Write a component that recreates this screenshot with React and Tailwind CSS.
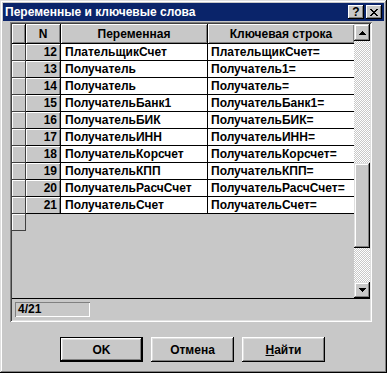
import React from "react";

const rows = [
  ["12", "ПлательщикСчет", "ПлательщикСчет="],
  ["13", "Получатель", "Получатель1="],
  ["14", "Получатель", "Получатель="],
  ["15", "ПолучательБанк1", "ПолучательБанк1="],
  ["16", "ПолучательБИК", "ПолучательБИК="],
  ["17", "ПолучательИНН", "ПолучательИНН="],
  ["18", "ПолучательКорсчет", "ПолучательКорсчет="],
  ["19", "ПолучательКПП", "ПолучательКПП="],
  ["20", "ПолучательРасчСчет", "ПолучательРасчСчет="],
  ["21", "ПолучательСчет", "ПолучательСчет="],
];

function Arrow({ up }) {
  return (
    <svg width="7" height="4" viewBox="0 0 7 4">
      {up ? (
        <path d="M3 0h1v1h1v1h1v1h1v1H0V3h1V2h1V1h1z" fill="#000" />
      ) : (
        <path d="M0 0h7v1H6v1H5v1H4v1H3V3H2V2H1V1H0z" fill="#000" />
      )}
    </svg>
  );
}

function ScrollBtn({ up, h }) {
  return (
    <div
      className={`flex items-center justify-center bg-[#c8c8c8] shadow-[inset_-1px_-1px_#000,inset_1px_1px_#dfdfdf,inset_-2px_-2px_#808080,inset_2px_2px_#fff] ${
        h === 17 ? "h-[17px]" : "h-[16px]"
      }`}
    >
      <Arrow up={up} />
    </div>
  );
}

export default function App() {
  return (
    <div className="w-[387px] h-[373px] bg-[#c8c8c8] p-[3px] flex flex-col font-['Liberation_Sans',Arial,sans-serif] font-bold text-[12px] text-black shadow-[inset_-1px_-1px_#000,inset_1px_1px_#dfdfdf,inset_-2px_-2px_#808080,inset_2px_2px_#fff]">
      {/* Title bar */}
      <div className="h-[18px] bg-[#0a246a] flex items-center pl-[2px] pr-[2px]">
        <span className="text-white text-[12px] leading-[18px] flex-1">
          Переменные и ключевые слова
        </span>
        <div className="w-[16px] h-[14px] flex items-center justify-center bg-[#c8c8c8] shadow-[inset_-1px_-1px_#000,inset_1px_1px_#fff,inset_-2px_-2px_#808080] text-[12px] leading-[12px]">
          ?
        </div>
        <div className="w-[16px] h-[14px] ml-[2px] flex items-center justify-center bg-[#c8c8c8] shadow-[inset_-1px_-1px_#000,inset_1px_1px_#fff,inset_-2px_-2px_#808080]">
          <svg width="8" height="7" viewBox="0 0 8 7">
            <path
              d="M0 0h2v1h1v1h2V1h1V0h2v1H7v1H6v1H5v1h1v1h1v1h1v1H6V6H5V5H3v1H2v1H0V6h1V5h1V4h1V3H2V2H1V1H0z"
              fill="#000"
            />
          </svg>
        </div>
      </div>

      {/* Client */}
      <div className="flex flex-col pl-[7px] pt-[1px]">
        <div className="w-[362px] h-[300px] p-[2px] shadow-[inset_1px_1px_#808080,inset_-1px_-1px_#fff,inset_2px_2px_#404040,inset_-2px_-2px_#dfdfdf] flex flex-col">
          {/* Grid */}
          <div className="h-[275px] flex border-b border-black">
            <div className="w-[342px] flex flex-col">
              {/* header */}
              <div className="flex h-[20px]">
                <div className="w-[14px] border-r border-b border-black bg-[#c8c8c8] shadow-[inset_1px_1px_#fff,inset_-1px_-1px_#808080]" />
                <div className="w-[34px] border-b border-black bg-[#c8c8c8] shadow-[inset_1px_1px_#fff,inset_-1px_-1px_#808080] flex items-center justify-center leading-[16px]">
                  N
                </div>
                <div className="w-[147px] border-l border-b border-black bg-[#c8c8c8] shadow-[inset_1px_1px_#fff,inset_-1px_-1px_#808080] flex items-center justify-center leading-[16px]">
                  Переменная
                </div>
                <div className="w-[147px] border-l border-b border-black bg-[#c8c8c8] shadow-[inset_1px_1px_#fff,inset_-1px_-1px_#808080] flex items-center justify-center leading-[16px]">
                  Ключевая строка
                </div>
              </div>
              {rows.map(([n, v, k]) => (
                <div key={n} className="flex h-[17px]">
                  <div className="w-[14px] border-r border-b border-[#404040] bg-[#c8c8c8] shadow-[inset_1px_1px_#fff]" />
                  <div className="w-[34px] border-b border-black bg-[#c8c8c8] shadow-[inset_1px_1px_#fff,inset_-1px_0_#808080] text-right pr-[3px] leading-[16px]">
                    {n}
                  </div>
                  <div className="w-[147px] bg-white border-l border-b border-black pl-[4px] leading-[16px] whitespace-nowrap overflow-hidden">
                    {v}
                  </div>
                  <div className="w-[147px] bg-white border-l border-b border-black pl-[3px] leading-[16px] whitespace-nowrap overflow-hidden">
                    {k}
                  </div>
                </div>
              ))}
              <div className="flex h-[17px]">
                <div className="w-[14px] border-r border-b border-[#404040] bg-[#c8c8c8] shadow-[inset_1px_1px_#fff]" />
              </div>
            </div>
            {/* Scrollbar */}
            <div className="w-[16px] flex flex-col">
              <ScrollBtn up h={17} />
              <div className="flex-1 flex flex-col bg-[repeating-conic-gradient(#fff_0%_25%,#c8c8c8_0%_50%)] bg-[length:2px_2px]">
                <div className="h-[122px]" />
                <div className="h-[85px] bg-[#c8c8c8] shadow-[inset_-1px_-1px_#000,inset_1px_1px_#dfdfdf,inset_-2px_-2px_#808080,inset_2px_2px_#fff]" />
              </div>
              <ScrollBtn h={16} />
            </div>
          </div>
          {/* Status */}
          <div className="flex-1 pl-[3px] pt-[3px]">
            <div className="w-[75px] h-[15px] shadow-[inset_1px_1px_#808080,inset_-1px_-1px_#fff] pl-[3px] leading-[15px]">
              4/21
            </div>
          </div>
        </div>

        {/* Buttons */}
        <div className="flex gap-[8px] mt-[15px] pl-[50px]">
          <div className="w-[83px] h-[25px] border border-black">
            <div className="w-full h-full flex items-center justify-center shadow-[inset_-1px_-1px_#000,inset_1px_1px_#fff,inset_-2px_-2px_#808080,inset_2px_2px_#dfdfdf]">
              OK
            </div>
          </div>
          <div className="w-[83px] h-[25px] flex items-center justify-center shadow-[inset_-1px_-1px_#000,inset_1px_1px_#fff,inset_-2px_-2px_#808080,inset_2px_2px_#dfdfdf]">
            Отмена
          </div>
          <div className="w-[83px] h-[25px] flex items-center justify-center shadow-[inset_-1px_-1px_#000,inset_1px_1px_#fff,inset_-2px_-2px_#808080,inset_2px_2px_#dfdfdf]">
            <span>
              <span className="underline">Н</span>айти
            </span>
          </div>
        </div>
      </div>
    </div>
  );
}
